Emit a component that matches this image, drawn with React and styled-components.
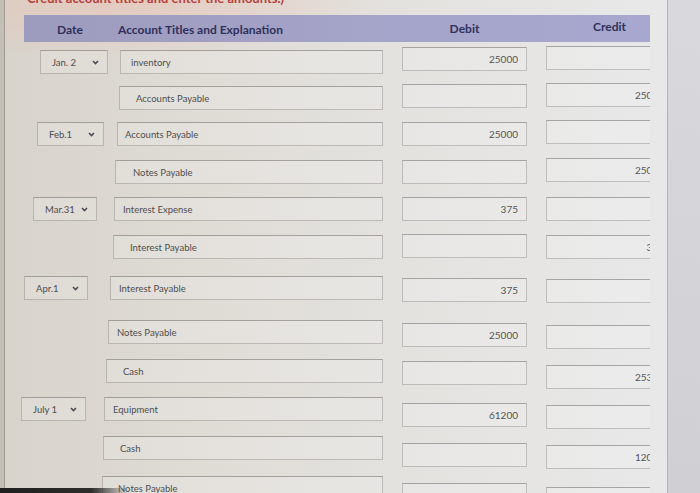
import React from 'react';
import styled, { createGlobalStyle } from 'styled-components';

const GlobalStyle = createGlobalStyle`
  html, body {
    margin: 0;
    padding: 0;
  }
  body {
    width: 700px;
    height: 493px;
    overflow: hidden;
    background: #d2d2d6;
    font-family: Lato, "Open Sans", sans-serif;
  }
`;

const Screen = styled.div`
  position: relative;
  display: flex;
  width: 700px;
  height: 493px;
  overflow: hidden;
`;

const Bezel = styled.div`
  width: 4px;
  background: #c3beb6;
  border-right: 1px solid #9f9a92;
`;

const Panel = styled.div`
  width: 645px;
  padding-right: 17px;
  background:
    radial-gradient(ellipse 260px 60px at 120px 0px, rgba(236, 190, 176, 0.55), transparent),
    linear-gradient(90deg, #d8d3cb 0%, #dfdcd6 30%, #e4e3e0 65%, #e8e8e9 100%);
  border-right: 1px solid #b3b3b7;
`;

const Inner = styled.div`
  width: 645px;
  height: 493px;
  overflow: hidden;
`;

const TopNote = styled.div`
  height: 6px;
  overflow: hidden;
  padding-left: 22px;
  font-size: 13px;
  font-weight: 700;
  line-height: 14px;
  color: #b8403c;
  white-space: nowrap;

  span {
    display: block;
    margin-top: -9px;
  }
`;

const Gutter = styled.div`
  flex: 1;
  background: linear-gradient(180deg, #d9d9dd 0%, #cfcfd4 100%);
`;

const HeaderBar = styled.div`
  display: grid;
  grid-template-columns: 359px 125px 127px;
  column-gap: 19px;
  margin: 9px 0 0 19px;
  height: 27px;
  width: 649px;
  align-items: center;
  background: linear-gradient(90deg, #9d9bbd 0%, #a4a3c8 50%, #a8a8d0 100%);
  color: #30305a;
  font-size: 12px;
  font-weight: 700;
`;

const HeadLeft = styled.div`
  display: flex;
  padding-left: 33px;
`;

const HeadLabel = styled.div`
  width: ${p => p.$w || 'auto'};
  text-align: ${p => p.$align || 'left'};
  margin-top: ${p => p.$dy || 0}px;
`;

const Row = styled.div`
  display: grid;
  grid-template-columns: 378px 125px 127px;
  column-gap: 19px;
  margin-top: ${p => p.$top}px;
  height: 24px;
`;

const LeftCell = styled.div`
  display: flex;
  padding-left: ${p => p.$pad}px;
  gap: ${p => p.$gap}px;
`;

const Field = styled.div`
  box-sizing: border-box;
  height: 24px;
  display: flex;
  align-items: center;
  background: rgba(255, 255, 255, 0.16);
  border: 1px solid rgba(125, 122, 118, 0.4);
  border-top-color: rgba(105, 102, 98, 0.52);
  color: #4e4e4e;
  font-size: 9.5px;
  white-space: nowrap;
`;

const DateSelect = styled(Field)`
  width: ${p => p.$w}px;
  justify-content: space-between;
  padding: 0 8px 0 11px;
`;

const AccountBox = styled(Field)`
  flex: 1;
  padding-left: ${p => p.$indent}px;
`;

const AmountBox = styled(Field)`
  justify-content: flex-end;
  padding-right: 8px;
  font-size: 10px;
  color: #555;
  margin-top: ${p => p.$dy}px;
  margin-bottom: ${p => -p.$dy}px;
`;

const PhotoEdge = styled.div`
  position: absolute;
  left: 0;
  bottom: 0;
  width: 130px;
  height: 5px;
  background: linear-gradient(90deg, #1f1f1f 0%, #2e2d2c 70%, rgba(60, 60, 60, 0) 100%);
`;

const Chevron = () => (
  <svg width="7" height="5" viewBox="0 0 7 5">
    <polyline points="1,1 3.5,3.5 6,1" fill="none" stroke="#4a4a55" strokeWidth="1.6" />
  </svg>
);

const rows = [
  { top: 8, date: 'Jan. 2', dateX: 40, dateW: 68, acct: 120, title: 'inventory', indent: 10, debit: '25000', dd: -3, cd: -4 },
  { top: 12, acct: 119, title: 'Accounts Payable', indent: 16, credit: '25000', dd: -2, cd: -3 },
  { top: 12, date: 'Feb.1', dateX: 37, dateW: 67, acct: 117, title: 'Accounts Payable', indent: 7, debit: '25000', dd: 0, cd: -2 },
  { top: 14, acct: 115, title: 'Notes Payable', indent: 17, credit: '25000', dd: 0, cd: -2 },
  { top: 13, date: 'Mar.31', dateX: 33, dateW: 64, acct: 114, title: 'Interest Expense', indent: 8, debit: '375', dd: 0, cd: 0 },
  { top: 14, acct: 113, title: 'Interest Payable', indent: 16, credit: '375', dd: -1, cd: 0 },
  { top: 17, date: 'Apr.1', dateX: 24, dateW: 64, acct: 110, title: 'Interest Payable', indent: 8, debit: '375', dd: 2, cd: 3 },
  { top: 20, acct: 108, title: 'Notes Payable', indent: 8, debit: '25000', dd: 3, cd: 5 },
  { top: 15, acct: 106, title: 'Cash', indent: 16, credit: '25375', dd: 2, cd: 6 },
  { top: 14, date: 'July 1', dateX: 21, dateW: 65, acct: 104, title: 'Equipment', indent: 8, debit: '61200', dd: 6, cd: 8 },
  { top: 15, acct: 103, title: 'Cash', indent: 16, credit: '12000', dd: 7, cd: 9 },
  { top: 16, acct: 102, title: 'Notes Payable', indent: 15, credit: '49200', dd: 7, cd: 11 },
];

const EntryRow = ({ row }) => {
  const pad = row.date ? row.dateX - 5 : row.acct - 5;
  const gap = row.date ? row.acct - row.dateX - row.dateW : 0;
  return (
    <Row $top={row.top}>
      <LeftCell $pad={pad} $gap={gap}>
        {row.date && (
          <DateSelect $w={row.dateW}>
            <span>{row.date}</span>
            <Chevron />
          </DateSelect>
        )}
        <AccountBox $indent={row.indent}>{row.title}</AccountBox>
      </LeftCell>
      <AmountBox $dy={row.dd}>{row.debit || ''}</AmountBox>
      <AmountBox $dy={row.cd}>{row.credit || ''}</AmountBox>
    </Row>
  );
};

export default function App() {
  return (
    <Screen>
      <GlobalStyle />
      <Bezel />
      <Panel>
        <Inner>
          <TopNote>
            <span>Credit account titles and enter the amounts.)</span>
          </TopNote>
          <HeaderBar>
            <HeadLeft>
              <HeadLabel $w="61px" $dy={2}>Date</HeadLabel>
              <HeadLabel $dy={2}>Account Titles and Explanation</HeadLabel>
            </HeadLeft>
            <HeadLabel $align="center" $dy={-1}>Debit</HeadLabel>
            <HeadLabel $align="center" $dy={-4}>Credit</HeadLabel>
          </HeaderBar>
          {rows.map((row, i) => (
            <EntryRow key={i} row={row} />
          ))}
        </Inner>
      </Panel>
      <Gutter />
      <PhotoEdge />
    </Screen>
  );
}
